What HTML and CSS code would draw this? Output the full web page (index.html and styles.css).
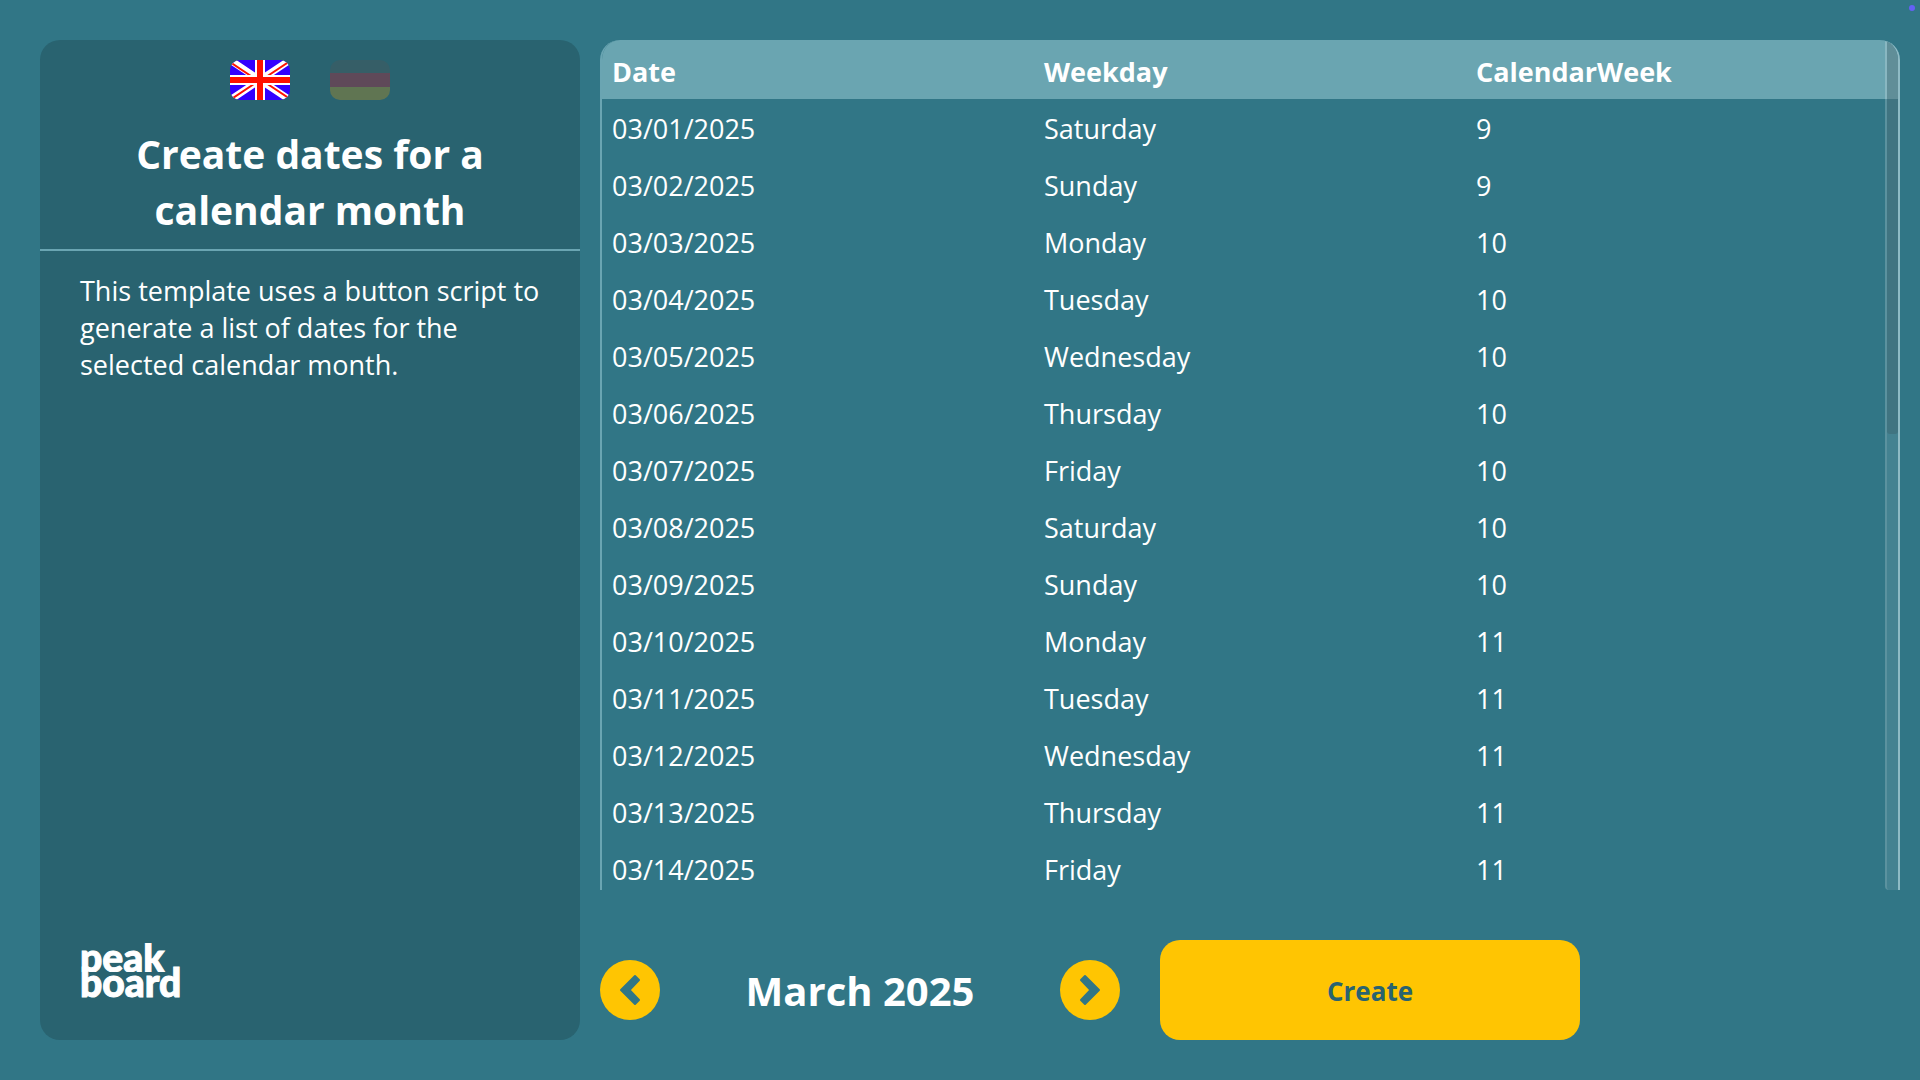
FILE: index.html
```html
<!DOCTYPE html>
<html lang="en">
<head>
<meta charset="utf-8">
<meta name="viewport" content="width=device-width, initial-scale=1">
<title>Create dates for a calendar month</title>
<link rel="stylesheet" href="styles.css">
</head>
<body>
<div class="app">
  <span class="status-dot"></span>
  <aside class="panel">
    <header class="panel-head">
      <div class="languages">
        <button class="flag" type="button" aria-label="English">
          <svg viewBox="0 0 60 40" width="60" height="40" aria-hidden="true">
            <rect width="60" height="40" fill="#3300ff"/>
            <path d="M0 0L60 40M60 0L0 40" stroke="#fff" stroke-width="7"/>
            <path d="M0 2L27 20M60 1L33 19M0 40L27 22M60 39L33 21" stroke="#ff1100" stroke-width="2"/>
            <path d="M30 0V40M0 20H60" stroke="#fff" stroke-width="10"/>
            <path d="M30 0V40M0 20H60" stroke="#ff1100" stroke-width="6"/>
          </svg>
        </button>
        <button class="flag flag-inactive" type="button" aria-label="Deutsch">
          <svg viewBox="0 0 60 40" width="60" height="40" aria-hidden="true">
            <rect width="60" height="14" fill="#555"/>
            <rect y="13" width="60" height="14" fill="#dd0f25"/>
            <rect y="27" width="60" height="13" fill="#e0a010"/>
          </svg>
        </button>
      </div>
      <h1>Create dates for a calendar month</h1>
    </header>
    <p class="description">This template uses a button script to generate a list of dates for the selected calendar month.</p>
    <div class="logo"><span class="logo-top">peak</span><span class="logo-bottom">board</span></div>
  </aside>
  <main class="content">
    <section class="dates">
      <table>
        <thead><tr><th scope="col">Date</th><th scope="col">Weekday</th><th scope="col">CalendarWeek</th></tr></thead>
        <tbody>
          <tr><td>03/01/2025</td><td>Saturday</td><td>9</td></tr>
          <tr><td>03/02/2025</td><td>Sunday</td><td>9</td></tr>
          <tr><td>03/03/2025</td><td>Monday</td><td>10</td></tr>
          <tr><td>03/04/2025</td><td>Tuesday</td><td>10</td></tr>
          <tr><td>03/05/2025</td><td>Wednesday</td><td>10</td></tr>
          <tr><td>03/06/2025</td><td>Thursday</td><td>10</td></tr>
          <tr><td>03/07/2025</td><td>Friday</td><td>10</td></tr>
          <tr><td>03/08/2025</td><td>Saturday</td><td>10</td></tr>
          <tr><td>03/09/2025</td><td>Sunday</td><td>10</td></tr>
          <tr><td>03/10/2025</td><td>Monday</td><td>11</td></tr>
          <tr><td>03/11/2025</td><td>Tuesday</td><td>11</td></tr>
          <tr><td>03/12/2025</td><td>Wednesday</td><td>11</td></tr>
          <tr><td>03/13/2025</td><td>Thursday</td><td>11</td></tr>
          <tr><td>03/14/2025</td><td>Friday</td><td>11</td></tr>
        </tbody>
      </table>
      <div class="scrollbar"><div class="thumb"></div></div>
    </section>
    <footer class="controls">
      <button class="round" type="button" aria-label="Previous month">
        <svg viewBox="0 0 60 60" width="60" height="60" aria-hidden="true"><path d="M35 16L39 20L29.500 30L39 40L35 44L21 30Z"/></svg>
      </button>
      <output class="month">March 2025</output>
      <button class="round" type="button" aria-label="Next month">
        <svg viewBox="0 0 60 60" width="60" height="60" aria-hidden="true"><path d="M25 16L21 20L30.500 30L21 40L25 44L39 30Z"/></svg>
      </button>
      <button class="create" type="button">Create</button>
    </footer>
  </main>
</div>
</body>
</html>
```
FILE: styles.css
```css
* {
  box-sizing: border-box;
}

body {
  margin: 0;
  background: #317686;
  color: #fff;
  font-family: "Segoe UI", "Open Sans", "Noto Sans", sans-serif;
  font-size: 27px;
  line-height: 37px;
}

button {
  padding: 0;
  border: 0;
  font: inherit;
  cursor: pointer;
}

svg {
  display: block;
}

.app {
  display: grid;
  grid-template-columns: 540px minmax(0, 1fr);
  gap: 20px;
  height: 100vh;
  padding: 40px 20px 40px 40px;
}

.status-dot {
  position: absolute;
  top: 5px;
  right: 5px;
  width: 6px;
  height: 6px;
  border-radius: 50%;
  background: #6460f5;
}

.panel {
  display: flex;
  flex-direction: column;
  border-radius: 20px;
  background: #296370;
}

.panel-head {
  padding: 20px 40px 11px;
  border-bottom: 2px solid #6aa5b2;
}

.languages {
  display: flex;
  justify-content: center;
  gap: 40px;
}

.flag {
  overflow: hidden;
  border-radius: 10px;
  background: none;
}

.flag-inactive {
  opacity: 0.3;
}

h1 {
  margin: 26px 0 0;
  padding: 0 40px;
  font-size: 39px;
  line-height: 56px;
  text-align: center;
}

.description {
  margin: 0;
  padding: 21px 40px;
}

.logo {
  display: flex;
  flex-direction: column;
  margin-top: auto;
  padding: 0 40px 44px;
  font-family: Lato, sans-serif;
  font-size: 39px;
  font-weight: 900;
  line-height: 28px;
  -webkit-text-stroke: 1px #fff;
}

/* The wordmark's p stands on the baseline, without a descender. */
.logo-top {
  height: 29px;
  overflow: hidden;
}

.logo-bottom {
  margin-top: -4px;
}

.content {
  display: flex;
  flex-direction: column;
  gap: 50px;
  min-height: 0;
}

.dates {
  position: relative;
  flex: 1;
  min-height: 0;
  overflow: hidden;
  border: solid #6aa5b2;
  border-width: 0 2px;
  border-right-color: #8fbbc5;
  border-radius: 20px 20px 0 0;
}

table {
  width: 100%;
  border-collapse: collapse;
  table-layout: fixed;
}

th,
td {
  height: 57px;
  padding: 2px 10px 0;
  text-align: left;
}

th {
  height: 59px;
  padding-top: 4px;
  background: #6aa5b1;
}

.scrollbar {
  position: absolute;
  top: 0;
  right: 0;
  bottom: 0;
  width: 13px;
  border-left: 2px solid #ffffff20;
  border-radius: 0 0 0 4px;
  background: #ffffff18;
}

.thumb {
  height: 394px;
  border-radius: 3px;
  background: #3d606866;
}

.controls {
  display: flex;
  align-items: center;
  height: 100px;
}

.round {
  border-radius: 50%;
  background: #ffc502;
  fill: #317686;
  stroke: #317686;
  stroke-width: 2px;
  stroke-linejoin: round;
}

.month {
  width: 400px;
  padding-top: 2px;
  font-size: 40px;
  font-weight: 700;
  line-height: 56px;
  text-align: center;
}

.create {
  width: 420px;
  height: 100px;
  margin-left: 40px;
  padding-top: 2px;
  border-radius: 20px;
  background: #ffc502;
  color: #296370;
  font-size: 26px;
  font-weight: 700;
}
```
